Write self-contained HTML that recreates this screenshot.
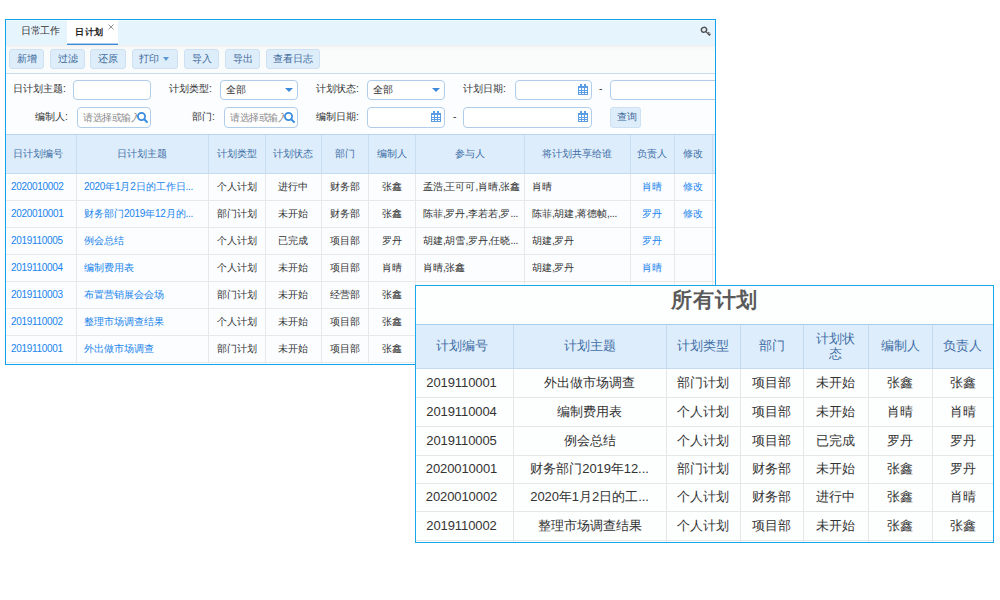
<!DOCTYPE html><html><head><meta charset="utf-8"><style>
*{box-sizing:border-box;margin:0;padding:0}
html,body{width:1000px;height:600px;overflow:hidden;background:#fff;font-family:"Liberation Sans",sans-serif;}
.a{position:absolute;white-space:nowrap}
.t{font-size:10.5px;line-height:12px;color:#333}
.btn{position:absolute;height:20px;border:1px solid #cde1f3;background:#deedfa;border-radius:3px;font-size:10.3px;color:#3d699a;text-align:center;line-height:18px;white-space:nowrap}
.inp{position:absolute;height:21px;border:1px solid #b0cdea;border-radius:4px;background:#fff;overflow:hidden}
.lbl{position:absolute;font-size:10.3px;color:#333;line-height:12px;white-space:nowrap}
.cell{position:absolute;white-space:nowrap;overflow:hidden;font-size:10px;letter-spacing:-0.3px;line-height:12px;color:#333}
.lnk{color:#2084ec}
.p{font-size:13px;line-height:15px;color:#333;letter-spacing:-0.1px}
.hd{color:#3f6ea6}
</style></head><body>
<div class="a" style="left:5px;top:19px;width:711px;height:346px;background:#fbfdff;"></div>
<div class="a" style="left:0;top:0;width:715px;height:364px;overflow:hidden">
<div class="a" style="left:6px;top:20px;width:709px;height:25px;background:#e6f4fe;"></div>
<div class="a" style="left:6px;top:20px;width:709px;height:1px;background:#f3f9fe;"></div>
<div class="a" style="left:67px;top:20px;width:51px;height:24px;background:#ffffff;"></div>
<div class="a" style="left:67px;top:43px;width:51px;height:1px;background:#a9cdee;"></div>
<div class="a" style="left:67px;top:44px;width:51px;height:1px;background:#3b8bd6;"></div>
<div class="a t" style="left:21px;top:25px;font-size:10px;letter-spacing:-0.5px;color:#333">日常工作</div>
<div class="a t" style="left:75px;top:25.5px;font-size:9.4px;font-weight:bold;color:#222;letter-spacing:0.5px">日计划</div>
<svg class="a" style="left:107px;top:23px" width="8" height="8" viewBox="0 0 8 8"><path d="M1.5 1.5L6.5 6.5M6.5 1.5L1.5 6.5" stroke="#8a8a8a" stroke-width="0.9"/></svg>
<svg class="a" style="left:699px;top:25px" width="14" height="14" viewBox="0 0 14 14"><ellipse cx="5" cy="4.8" rx="2.7" ry="2.4" transform="rotate(-30 5 4.8)" fill="none" stroke="#505050" stroke-width="1.4"/><path d="M6.9 6.6L10.8 10.6M8.9 8.6L10.3 7.3M10.2 9.9L11.5 8.7" stroke="#505050" stroke-width="1.3" fill="none"/></svg>
<div class="a" style="left:6px;top:45px;width:709px;height:28px;background:linear-gradient(#eeeeee 0px,#f5f6f6 2px,#f9fafa 5px,#fafcfc 9px);"></div>
<div class="a" style="left:6px;top:73px;width:709px;height:1px;background:#c7dcef;"></div>
<div class="btn" style="left:9px;top:49px;width:35px;height:20px;">新增</div>
<div class="btn" style="left:50px;top:49px;width:35px;height:20px;">过滤</div>
<div class="btn" style="left:90px;top:49px;width:36px;height:20px;">还原</div>
<div class="btn" style="left:132px;top:49px;width:46px;height:20px;"><span style="position:relative;left:-6px">打印</span><span class="a" style="left:30px;top:7px;width:0;height:0;border-left:3.6px solid transparent;border-right:3.6px solid transparent;border-top:4.6px solid #5b9bd5"></span></div>
<div class="btn" style="left:184px;top:49px;width:35px;height:20px;">导入</div>
<div class="btn" style="left:225px;top:49px;width:35px;height:20px;">导出</div>
<div class="btn" style="left:266px;top:49px;width:54px;height:20px;">查看日志</div>
<div class="a lbl" style="left:13px;top:82.5px;">日计划主题:</div>
<div class="inp" style="left:73px;top:80px;width:78px;height:20px"></div>
<div class="a lbl" style="left:169px;top:82.5px;">计划类型:</div>
<div class="inp" style="left:220px;top:80px;width:78px;height:20px"><span class="a" style="left:5px;top:3px;font-size:10.3px;line-height:12px;color:#333">全部</span><span class="a" style="right:4px;top:7px;width:0;height:0;border-left:4px solid transparent;border-right:4px solid transparent;border-top:4.8px solid #3f8ad8"></span></div>
<div class="a lbl" style="left:316px;top:82.5px;">计划状态:</div>
<div class="inp" style="left:367px;top:80px;width:78px;height:20px"><span class="a" style="left:5px;top:3px;font-size:10.3px;line-height:12px;color:#333">全部</span><span class="a" style="right:4px;top:7px;width:0;height:0;border-left:4px solid transparent;border-right:4px solid transparent;border-top:4.8px solid #3f8ad8"></span></div>
<div class="a lbl" style="left:463px;top:82.5px;">计划日期:</div>
<div class="inp" style="left:515px;top:80px;width:77px;height:20px"><svg class="a" style="right:3px;top:3px" width="10" height="11" viewBox="0 0 10 11" shape-rendering="crispEdges"><rect x="0" y="2" width="10" height="9" fill="#5b9de3"/><rect x="2" y="0" width="2" height="3" fill="#5b9de3"/><rect x="6" y="0" width="2" height="3" fill="#5b9de3"/><g fill="#fff"><rect x="1" y="4" width="2" height="2"/><rect x="4" y="4" width="2" height="2"/><rect x="7" y="4" width="2" height="2"/><rect x="1" y="7" width="2" height="1"/><rect x="4" y="7" width="2" height="1"/><rect x="7" y="7" width="2" height="1"/><rect x="1" y="9" width="2" height="1"/><rect x="4" y="9" width="2" height="1"/><rect x="7" y="9" width="2" height="1"/></g></svg></div>
<div class="a lbl" style="left:599px;top:82.5px;">-</div>
<div class="inp" style="left:610px;top:80px;width:130px;height:20px"></div>
<div class="a lbl" style="left:35px;top:110.5px;">编制人:</div>
<div class="inp" style="left:77px;top:107px;width:74px;height:21px"><span class="a" style="left:5px;top:4px;width:54px;overflow:hidden;font-size:10.3px;letter-spacing:-0.5px;line-height:12px;color:#8c8c8c">请选择或输入</span><svg class="a" style="right:1px;top:3px" width="13" height="13" viewBox="0 0 13 13"><circle cx="5.5" cy="5.5" r="3.6" fill="none" stroke="#3b8ee0" stroke-width="1.8"/><path d="M8.2 8.2L11 11" stroke="#3b8ee0" stroke-width="2" stroke-linecap="round"/></svg></div>
<div class="a lbl" style="left:192px;top:110.5px;">部门:</div>
<div class="inp" style="left:224px;top:107px;width:74px;height:21px"><span class="a" style="left:5px;top:4px;width:54px;overflow:hidden;font-size:10.3px;letter-spacing:-0.5px;line-height:12px;color:#8c8c8c">请选择或输入</span><svg class="a" style="right:1px;top:3px" width="13" height="13" viewBox="0 0 13 13"><circle cx="5.5" cy="5.5" r="3.6" fill="none" stroke="#3b8ee0" stroke-width="1.8"/><path d="M8.2 8.2L11 11" stroke="#3b8ee0" stroke-width="2" stroke-linecap="round"/></svg></div>
<div class="a lbl" style="left:316px;top:110.5px;">编制日期:</div>
<div class="inp" style="left:367px;top:107px;width:78px;height:21px"><svg class="a" style="right:3px;top:3px" width="10" height="11" viewBox="0 0 10 11" shape-rendering="crispEdges"><rect x="0" y="2" width="10" height="9" fill="#5b9de3"/><rect x="2" y="0" width="2" height="3" fill="#5b9de3"/><rect x="6" y="0" width="2" height="3" fill="#5b9de3"/><g fill="#fff"><rect x="1" y="4" width="2" height="2"/><rect x="4" y="4" width="2" height="2"/><rect x="7" y="4" width="2" height="2"/><rect x="1" y="7" width="2" height="1"/><rect x="4" y="7" width="2" height="1"/><rect x="7" y="7" width="2" height="1"/><rect x="1" y="9" width="2" height="1"/><rect x="4" y="9" width="2" height="1"/><rect x="7" y="9" width="2" height="1"/></g></svg></div>
<div class="a lbl" style="left:453px;top:110.5px;">-</div>
<div class="inp" style="left:463px;top:107px;width:129px;height:21px"><svg class="a" style="right:3px;top:3px" width="10" height="11" viewBox="0 0 10 11" shape-rendering="crispEdges"><rect x="0" y="2" width="10" height="9" fill="#5b9de3"/><rect x="2" y="0" width="2" height="3" fill="#5b9de3"/><rect x="6" y="0" width="2" height="3" fill="#5b9de3"/><g fill="#fff"><rect x="1" y="4" width="2" height="2"/><rect x="4" y="4" width="2" height="2"/><rect x="7" y="4" width="2" height="2"/><rect x="1" y="7" width="2" height="1"/><rect x="4" y="7" width="2" height="1"/><rect x="7" y="7" width="2" height="1"/><rect x="1" y="9" width="2" height="1"/><rect x="4" y="9" width="2" height="1"/><rect x="7" y="9" width="2" height="1"/></g></svg></div>
<div class="btn" style="left:610px;top:107px;width:31px;height:21px;padding-left:3px">查询</div>
<div class="a" style="left:6px;top:134px;width:709px;height:40px;background:#ddedfb;"></div>
<div class="a" style="left:6px;top:134px;width:709px;height:1px;background:#b9d4ee;"></div>
<div class="a" style="left:6px;top:173px;width:709px;height:1px;background:#c5dbf0;"></div>
<div class="a" style="left:6px;top:200px;width:709px;height:1px;background:#e8e8e8;"></div>
<div class="a" style="left:6px;top:227px;width:709px;height:1px;background:#e8e8e8;"></div>
<div class="a" style="left:6px;top:254px;width:709px;height:1px;background:#e8e8e8;"></div>
<div class="a" style="left:6px;top:281px;width:709px;height:1px;background:#e8e8e8;"></div>
<div class="a" style="left:6px;top:308px;width:709px;height:1px;background:#e8e8e8;"></div>
<div class="a" style="left:6px;top:335px;width:709px;height:1px;background:#e8e8e8;"></div>
<div class="a" style="left:6px;top:362px;width:709px;height:1px;background:#e8e8e8;"></div>
<div class="a" style="left:76px;top:135px;width:1px;height:38px;background:#c9ddf0;"></div>
<div class="a" style="left:76px;top:174px;width:1px;height:188px;background:#e8e8e8;"></div>
<div class="a" style="left:208px;top:135px;width:1px;height:38px;background:#c9ddf0;"></div>
<div class="a" style="left:208px;top:174px;width:1px;height:188px;background:#e8e8e8;"></div>
<div class="a" style="left:265px;top:135px;width:1px;height:38px;background:#c9ddf0;"></div>
<div class="a" style="left:265px;top:174px;width:1px;height:188px;background:#e8e8e8;"></div>
<div class="a" style="left:321px;top:135px;width:1px;height:38px;background:#c9ddf0;"></div>
<div class="a" style="left:321px;top:174px;width:1px;height:188px;background:#e8e8e8;"></div>
<div class="a" style="left:368px;top:135px;width:1px;height:38px;background:#c9ddf0;"></div>
<div class="a" style="left:368px;top:174px;width:1px;height:188px;background:#e8e8e8;"></div>
<div class="a" style="left:415px;top:135px;width:1px;height:38px;background:#c9ddf0;"></div>
<div class="a" style="left:415px;top:174px;width:1px;height:188px;background:#e8e8e8;"></div>
<div class="a" style="left:524px;top:135px;width:1px;height:38px;background:#c9ddf0;"></div>
<div class="a" style="left:524px;top:174px;width:1px;height:188px;background:#e8e8e8;"></div>
<div class="a" style="left:630px;top:135px;width:1px;height:38px;background:#c9ddf0;"></div>
<div class="a" style="left:630px;top:174px;width:1px;height:188px;background:#e8e8e8;"></div>
<div class="a" style="left:674px;top:135px;width:1px;height:38px;background:#c9ddf0;"></div>
<div class="a" style="left:674px;top:174px;width:1px;height:188px;background:#e8e8e8;"></div>
<div class="a" style="left:712px;top:135px;width:1px;height:38px;background:#c9ddf0;"></div>
<div class="a" style="left:712px;top:174px;width:1px;height:188px;background:#e8e8e8;"></div>
<div class="a cell hd" style="left:3.0px;top:147.5px;width:70px;text-align:center;letter-spacing:0">日计划编号</div>
<div class="a cell hd" style="left:76.0px;top:147.5px;width:132px;text-align:center;letter-spacing:0">日计划主题</div>
<div class="a cell hd" style="left:208.0px;top:147.5px;width:57px;text-align:center;letter-spacing:0">计划类型</div>
<div class="a cell hd" style="left:265.0px;top:147.5px;width:56px;text-align:center;letter-spacing:0">计划状态</div>
<div class="a cell hd" style="left:321.0px;top:147.5px;width:47px;text-align:center;letter-spacing:0">部门</div>
<div class="a cell hd" style="left:368.0px;top:147.5px;width:47px;text-align:center;letter-spacing:0">编制人</div>
<div class="a cell hd" style="left:415.0px;top:147.5px;width:109px;text-align:center;letter-spacing:0">参与人</div>
<div class="a cell hd" style="left:524.0px;top:147.5px;width:106px;text-align:center;letter-spacing:0">将计划共享给谁</div>
<div class="a cell hd" style="left:630.0px;top:147.5px;width:44px;text-align:center;letter-spacing:0">负责人</div>
<div class="a cell hd" style="left:674.0px;top:147.5px;width:38px;text-align:center;letter-spacing:0">修改</div>
<div class="a cell lnk" style="left:11px;top:181px;">2020010002</div>
<div class="a cell lnk" style="left:84px;top:181px;">2020<span style="position:relative;top:0px;letter-spacing:0">年</span>1<span style="position:relative;top:0px;letter-spacing:0">月</span>2<span style="position:relative;top:0px;letter-spacing:0">日的工作日</span>...</div>
<div class="a cell" style="left:208.0px;top:181px;width:57px;text-align:center;"><span style="position:relative;top:0px;letter-spacing:0">个人计划</span></div>
<div class="a cell" style="left:265.0px;top:181px;width:56px;text-align:center;"><span style="position:relative;top:0px;letter-spacing:0">进行中</span></div>
<div class="a cell" style="left:321.0px;top:181px;width:47px;text-align:center;"><span style="position:relative;top:0px;letter-spacing:0">财务部</span></div>
<div class="a cell" style="left:368.0px;top:181px;width:47px;text-align:center;"><span style="position:relative;top:0px;letter-spacing:0">张鑫</span></div>
<div class="a cell" style="left:423px;top:181px;"><span style="position:relative;top:0px;letter-spacing:0">孟浩</span>,<span style="position:relative;top:0px;letter-spacing:0">王可可</span>,<span style="position:relative;top:0px;letter-spacing:0">肖晴</span>,<span style="position:relative;top:0px;letter-spacing:0">张鑫</span></div>
<div class="a cell" style="left:532px;top:181px;"><span style="position:relative;top:0px;letter-spacing:0">肖晴</span></div>
<div class="a cell lnk" style="left:630.0px;top:181px;width:44px;text-align:center;"><span style="position:relative;top:0px;letter-spacing:0">肖晴</span></div>
<div class="a cell lnk" style="left:674.0px;top:181px;width:38px;text-align:center;"><span style="position:relative;top:0px;letter-spacing:0">修改</span></div>
<div class="a cell lnk" style="left:11px;top:208px;">2020010001</div>
<div class="a cell lnk" style="left:84px;top:208px;"><span style="position:relative;top:0px;letter-spacing:0">财务部门</span>2019<span style="position:relative;top:0px;letter-spacing:0">年</span>12<span style="position:relative;top:0px;letter-spacing:0">月的</span>...</div>
<div class="a cell" style="left:208.0px;top:208px;width:57px;text-align:center;"><span style="position:relative;top:0px;letter-spacing:0">部门计划</span></div>
<div class="a cell" style="left:265.0px;top:208px;width:56px;text-align:center;"><span style="position:relative;top:0px;letter-spacing:0">未开始</span></div>
<div class="a cell" style="left:321.0px;top:208px;width:47px;text-align:center;"><span style="position:relative;top:0px;letter-spacing:0">财务部</span></div>
<div class="a cell" style="left:368.0px;top:208px;width:47px;text-align:center;"><span style="position:relative;top:0px;letter-spacing:0">张鑫</span></div>
<div class="a cell" style="left:423px;top:208px;"><span style="position:relative;top:0px;letter-spacing:0">陈菲</span>,<span style="position:relative;top:0px;letter-spacing:0">罗丹</span>,<span style="position:relative;top:0px;letter-spacing:0">李若若</span>,<span style="position:relative;top:0px;letter-spacing:0">罗</span>...</div>
<div class="a cell" style="left:532px;top:208px;"><span style="position:relative;top:0px;letter-spacing:0">陈菲</span>,<span style="position:relative;top:0px;letter-spacing:0">胡建</span>,<span style="position:relative;top:0px;letter-spacing:0">蒋德帧</span>,...</div>
<div class="a cell lnk" style="left:630.0px;top:208px;width:44px;text-align:center;"><span style="position:relative;top:0px;letter-spacing:0">罗丹</span></div>
<div class="a cell lnk" style="left:674.0px;top:208px;width:38px;text-align:center;"><span style="position:relative;top:0px;letter-spacing:0">修改</span></div>
<div class="a cell lnk" style="left:11px;top:235px;">2019110005</div>
<div class="a cell lnk" style="left:84px;top:235px;"><span style="position:relative;top:0px;letter-spacing:0">例会总结</span></div>
<div class="a cell" style="left:208.0px;top:235px;width:57px;text-align:center;"><span style="position:relative;top:0px;letter-spacing:0">个人计划</span></div>
<div class="a cell" style="left:265.0px;top:235px;width:56px;text-align:center;"><span style="position:relative;top:0px;letter-spacing:0">已完成</span></div>
<div class="a cell" style="left:321.0px;top:235px;width:47px;text-align:center;"><span style="position:relative;top:0px;letter-spacing:0">项目部</span></div>
<div class="a cell" style="left:368.0px;top:235px;width:47px;text-align:center;"><span style="position:relative;top:0px;letter-spacing:0">罗丹</span></div>
<div class="a cell" style="left:423px;top:235px;"><span style="position:relative;top:0px;letter-spacing:0">胡建</span>,<span style="position:relative;top:0px;letter-spacing:0">胡雪</span>,<span style="position:relative;top:0px;letter-spacing:0">罗丹</span>,<span style="position:relative;top:0px;letter-spacing:0">任晓</span>...</div>
<div class="a cell" style="left:532px;top:235px;"><span style="position:relative;top:0px;letter-spacing:0">胡建</span>,<span style="position:relative;top:0px;letter-spacing:0">罗丹</span></div>
<div class="a cell lnk" style="left:630.0px;top:235px;width:44px;text-align:center;"><span style="position:relative;top:0px;letter-spacing:0">罗丹</span></div>
<div class="a cell lnk" style="left:11px;top:262px;">2019110004</div>
<div class="a cell lnk" style="left:84px;top:262px;"><span style="position:relative;top:0px;letter-spacing:0">编制费用表</span></div>
<div class="a cell" style="left:208.0px;top:262px;width:57px;text-align:center;"><span style="position:relative;top:0px;letter-spacing:0">个人计划</span></div>
<div class="a cell" style="left:265.0px;top:262px;width:56px;text-align:center;"><span style="position:relative;top:0px;letter-spacing:0">未开始</span></div>
<div class="a cell" style="left:321.0px;top:262px;width:47px;text-align:center;"><span style="position:relative;top:0px;letter-spacing:0">项目部</span></div>
<div class="a cell" style="left:368.0px;top:262px;width:47px;text-align:center;"><span style="position:relative;top:0px;letter-spacing:0">肖晴</span></div>
<div class="a cell" style="left:423px;top:262px;"><span style="position:relative;top:0px;letter-spacing:0">肖晴</span>,<span style="position:relative;top:0px;letter-spacing:0">张鑫</span></div>
<div class="a cell" style="left:532px;top:262px;"><span style="position:relative;top:0px;letter-spacing:0">胡建</span>,<span style="position:relative;top:0px;letter-spacing:0">罗丹</span></div>
<div class="a cell lnk" style="left:630.0px;top:262px;width:44px;text-align:center;"><span style="position:relative;top:0px;letter-spacing:0">肖晴</span></div>
<div class="a cell lnk" style="left:11px;top:289px;">2019110003</div>
<div class="a cell lnk" style="left:84px;top:289px;"><span style="position:relative;top:0px;letter-spacing:0">布置营销展会会场</span></div>
<div class="a cell" style="left:208.0px;top:289px;width:57px;text-align:center;"><span style="position:relative;top:0px;letter-spacing:0">部门计划</span></div>
<div class="a cell" style="left:265.0px;top:289px;width:56px;text-align:center;"><span style="position:relative;top:0px;letter-spacing:0">未开始</span></div>
<div class="a cell" style="left:321.0px;top:289px;width:47px;text-align:center;"><span style="position:relative;top:0px;letter-spacing:0">经营部</span></div>
<div class="a cell" style="left:368.0px;top:289px;width:47px;text-align:center;"><span style="position:relative;top:0px;letter-spacing:0">张鑫</span></div>
<div class="a cell lnk" style="left:11px;top:316px;">2019110002</div>
<div class="a cell lnk" style="left:84px;top:316px;"><span style="position:relative;top:0px;letter-spacing:0">整理市场调查结果</span></div>
<div class="a cell" style="left:208.0px;top:316px;width:57px;text-align:center;"><span style="position:relative;top:0px;letter-spacing:0">个人计划</span></div>
<div class="a cell" style="left:265.0px;top:316px;width:56px;text-align:center;"><span style="position:relative;top:0px;letter-spacing:0">未开始</span></div>
<div class="a cell" style="left:321.0px;top:316px;width:47px;text-align:center;"><span style="position:relative;top:0px;letter-spacing:0">项目部</span></div>
<div class="a cell" style="left:368.0px;top:316px;width:47px;text-align:center;"><span style="position:relative;top:0px;letter-spacing:0">张鑫</span></div>
<div class="a cell lnk" style="left:11px;top:343px;">2019110001</div>
<div class="a cell lnk" style="left:84px;top:343px;"><span style="position:relative;top:0px;letter-spacing:0">外出做市场调查</span></div>
<div class="a cell" style="left:208.0px;top:343px;width:57px;text-align:center;"><span style="position:relative;top:0px;letter-spacing:0">部门计划</span></div>
<div class="a cell" style="left:265.0px;top:343px;width:56px;text-align:center;"><span style="position:relative;top:0px;letter-spacing:0">未开始</span></div>
<div class="a cell" style="left:321.0px;top:343px;width:47px;text-align:center;"><span style="position:relative;top:0px;letter-spacing:0">项目部</span></div>
<div class="a cell" style="left:368.0px;top:343px;width:47px;text-align:center;"><span style="position:relative;top:0px;letter-spacing:0">张鑫</span></div>
</div>
<div class="a" style="left:5px;top:19px;width:711px;height:346px;background:transparent;border:1px solid #0ea3ea"></div>
<div class="a" style="left:415px;top:285px;width:579px;height:258px;background:#fdfefe;border:1px solid #1aa6ea"></div>
<div class="a a" style="left:514.2px;top:287.5px;width:400px;text-align:center;font-size:21px;letter-spacing:0.8px;text-indent:0.8px;line-height:24px;font-weight:bold;color:#5a5a5a">所有计划</div>
<div class="a" style="left:416px;top:324px;width:577px;height:45px;background:#deedfb;"></div>
<div class="a" style="left:416px;top:324px;width:577px;height:1px;background:#a9cdef;"></div>
<div class="a" style="left:416px;top:368px;width:577px;height:1px;background:#c3daf0;"></div>
<div class="a" style="left:416px;top:397px;width:577px;height:1px;background:#e6e6e6;"></div>
<div class="a" style="left:416px;top:426px;width:577px;height:1px;background:#e6e6e6;"></div>
<div class="a" style="left:416px;top:455px;width:577px;height:1px;background:#e6e6e6;"></div>
<div class="a" style="left:416px;top:483px;width:577px;height:1px;background:#e6e6e6;"></div>
<div class="a" style="left:416px;top:511px;width:577px;height:1px;background:#e6e6e6;"></div>
<div class="a" style="left:416px;top:540px;width:577px;height:1px;background:#e6e6e6;"></div>
<div class="a" style="left:513px;top:325px;width:1px;height:44px;background:#c3daf0;"></div>
<div class="a" style="left:513px;top:369px;width:1px;height:173px;background:#e6e6e6;"></div>
<div class="a" style="left:666px;top:325px;width:1px;height:44px;background:#c3daf0;"></div>
<div class="a" style="left:666px;top:369px;width:1px;height:173px;background:#e6e6e6;"></div>
<div class="a" style="left:740px;top:325px;width:1px;height:44px;background:#c3daf0;"></div>
<div class="a" style="left:740px;top:369px;width:1px;height:173px;background:#e6e6e6;"></div>
<div class="a" style="left:803px;top:325px;width:1px;height:44px;background:#c3daf0;"></div>
<div class="a" style="left:803px;top:369px;width:1px;height:173px;background:#e6e6e6;"></div>
<div class="a" style="left:868px;top:325px;width:1px;height:44px;background:#c3daf0;"></div>
<div class="a" style="left:868px;top:369px;width:1px;height:173px;background:#e6e6e6;"></div>
<div class="a" style="left:932px;top:325px;width:1px;height:44px;background:#c3daf0;"></div>
<div class="a" style="left:932px;top:369px;width:1px;height:173px;background:#e6e6e6;"></div>
<div class="a cell p hd" style="left:413.5px;top:338px;width:97px;text-align:center;letter-spacing:0">计划编号</div>
<div class="a cell p hd" style="left:513.0px;top:338px;width:153px;text-align:center;letter-spacing:0">计划主题</div>
<div class="a cell p hd" style="left:666.0px;top:338px;width:74px;text-align:center;letter-spacing:0">计划类型</div>
<div class="a cell p hd" style="left:740.0px;top:338px;width:63px;text-align:center;letter-spacing:0">部门</div>
<div class="a cell p hd" style="left:803.0px;top:331px;width:65px;text-align:center;white-space:normal;letter-spacing:0">计划状<br>态</div>
<div class="a cell p hd" style="left:868.0px;top:338px;width:64px;text-align:center;letter-spacing:0">编制人</div>
<div class="a cell p hd" style="left:932.0px;top:338px;width:61px;text-align:center;letter-spacing:0">负责人</div>
<div class="a cell p" style="left:413.0px;top:374.5px;width:97px;text-align:center;">2019110001</div>
<div class="a cell p" style="left:513.0px;top:374.5px;width:153px;text-align:center;"><span style="position:relative;top:0px;letter-spacing:0">外出做市场调查</span></div>
<div class="a cell p" style="left:666.0px;top:374.5px;width:74px;text-align:center;"><span style="position:relative;top:0px;letter-spacing:0">部门计划</span></div>
<div class="a cell p" style="left:740.0px;top:374.5px;width:63px;text-align:center;"><span style="position:relative;top:0px;letter-spacing:0">项目部</span></div>
<div class="a cell p" style="left:803.0px;top:374.5px;width:65px;text-align:center;"><span style="position:relative;top:0px;letter-spacing:0">未开始</span></div>
<div class="a cell p" style="left:868.0px;top:374.5px;width:64px;text-align:center;"><span style="position:relative;top:0px;letter-spacing:0">张鑫</span></div>
<div class="a cell p" style="left:932.0px;top:374.5px;width:61px;text-align:center;"><span style="position:relative;top:0px;letter-spacing:0">张鑫</span></div>
<div class="a cell p" style="left:413.0px;top:403.5px;width:97px;text-align:center;">2019110004</div>
<div class="a cell p" style="left:513.0px;top:403.5px;width:153px;text-align:center;"><span style="position:relative;top:0px;letter-spacing:0">编制费用表</span></div>
<div class="a cell p" style="left:666.0px;top:403.5px;width:74px;text-align:center;"><span style="position:relative;top:0px;letter-spacing:0">个人计划</span></div>
<div class="a cell p" style="left:740.0px;top:403.5px;width:63px;text-align:center;"><span style="position:relative;top:0px;letter-spacing:0">项目部</span></div>
<div class="a cell p" style="left:803.0px;top:403.5px;width:65px;text-align:center;"><span style="position:relative;top:0px;letter-spacing:0">未开始</span></div>
<div class="a cell p" style="left:868.0px;top:403.5px;width:64px;text-align:center;"><span style="position:relative;top:0px;letter-spacing:0">肖晴</span></div>
<div class="a cell p" style="left:932.0px;top:403.5px;width:61px;text-align:center;"><span style="position:relative;top:0px;letter-spacing:0">肖晴</span></div>
<div class="a cell p" style="left:413.0px;top:432.5px;width:97px;text-align:center;">2019110005</div>
<div class="a cell p" style="left:513.0px;top:432.5px;width:153px;text-align:center;"><span style="position:relative;top:0px;letter-spacing:0">例会总结</span></div>
<div class="a cell p" style="left:666.0px;top:432.5px;width:74px;text-align:center;"><span style="position:relative;top:0px;letter-spacing:0">个人计划</span></div>
<div class="a cell p" style="left:740.0px;top:432.5px;width:63px;text-align:center;"><span style="position:relative;top:0px;letter-spacing:0">项目部</span></div>
<div class="a cell p" style="left:803.0px;top:432.5px;width:65px;text-align:center;"><span style="position:relative;top:0px;letter-spacing:0">已完成</span></div>
<div class="a cell p" style="left:868.0px;top:432.5px;width:64px;text-align:center;"><span style="position:relative;top:0px;letter-spacing:0">罗丹</span></div>
<div class="a cell p" style="left:932.0px;top:432.5px;width:61px;text-align:center;"><span style="position:relative;top:0px;letter-spacing:0">罗丹</span></div>
<div class="a cell p" style="left:413.0px;top:461.0px;width:97px;text-align:center;">2020010001</div>
<div class="a cell p" style="left:513.0px;top:461.0px;width:153px;text-align:center;"><span style="position:relative;top:0px;letter-spacing:0">财务部门</span>2019<span style="position:relative;top:0px;letter-spacing:0">年</span>12...</div>
<div class="a cell p" style="left:666.0px;top:461.0px;width:74px;text-align:center;"><span style="position:relative;top:0px;letter-spacing:0">部门计划</span></div>
<div class="a cell p" style="left:740.0px;top:461.0px;width:63px;text-align:center;"><span style="position:relative;top:0px;letter-spacing:0">财务部</span></div>
<div class="a cell p" style="left:803.0px;top:461.0px;width:65px;text-align:center;"><span style="position:relative;top:0px;letter-spacing:0">未开始</span></div>
<div class="a cell p" style="left:868.0px;top:461.0px;width:64px;text-align:center;"><span style="position:relative;top:0px;letter-spacing:0">张鑫</span></div>
<div class="a cell p" style="left:932.0px;top:461.0px;width:61px;text-align:center;"><span style="position:relative;top:0px;letter-spacing:0">罗丹</span></div>
<div class="a cell p" style="left:413.0px;top:489.0px;width:97px;text-align:center;">2020010002</div>
<div class="a cell p" style="left:513.0px;top:489.0px;width:153px;text-align:center;">2020<span style="position:relative;top:0px;letter-spacing:0">年</span>1<span style="position:relative;top:0px;letter-spacing:0">月</span>2<span style="position:relative;top:0px;letter-spacing:0">日的工</span>...</div>
<div class="a cell p" style="left:666.0px;top:489.0px;width:74px;text-align:center;"><span style="position:relative;top:0px;letter-spacing:0">个人计划</span></div>
<div class="a cell p" style="left:740.0px;top:489.0px;width:63px;text-align:center;"><span style="position:relative;top:0px;letter-spacing:0">财务部</span></div>
<div class="a cell p" style="left:803.0px;top:489.0px;width:65px;text-align:center;"><span style="position:relative;top:0px;letter-spacing:0">进行中</span></div>
<div class="a cell p" style="left:868.0px;top:489.0px;width:64px;text-align:center;"><span style="position:relative;top:0px;letter-spacing:0">张鑫</span></div>
<div class="a cell p" style="left:932.0px;top:489.0px;width:61px;text-align:center;"><span style="position:relative;top:0px;letter-spacing:0">肖晴</span></div>
<div class="a cell p" style="left:413.0px;top:517.5px;width:97px;text-align:center;">2019110002</div>
<div class="a cell p" style="left:513.0px;top:517.5px;width:153px;text-align:center;"><span style="position:relative;top:0px;letter-spacing:0">整理市场调查结果</span></div>
<div class="a cell p" style="left:666.0px;top:517.5px;width:74px;text-align:center;"><span style="position:relative;top:0px;letter-spacing:0">个人计划</span></div>
<div class="a cell p" style="left:740.0px;top:517.5px;width:63px;text-align:center;"><span style="position:relative;top:0px;letter-spacing:0">项目部</span></div>
<div class="a cell p" style="left:803.0px;top:517.5px;width:65px;text-align:center;"><span style="position:relative;top:0px;letter-spacing:0">未开始</span></div>
<div class="a cell p" style="left:868.0px;top:517.5px;width:64px;text-align:center;"><span style="position:relative;top:0px;letter-spacing:0">张鑫</span></div>
<div class="a cell p" style="left:932.0px;top:517.5px;width:61px;text-align:center;"><span style="position:relative;top:0px;letter-spacing:0">张鑫</span></div>
</body></html>
